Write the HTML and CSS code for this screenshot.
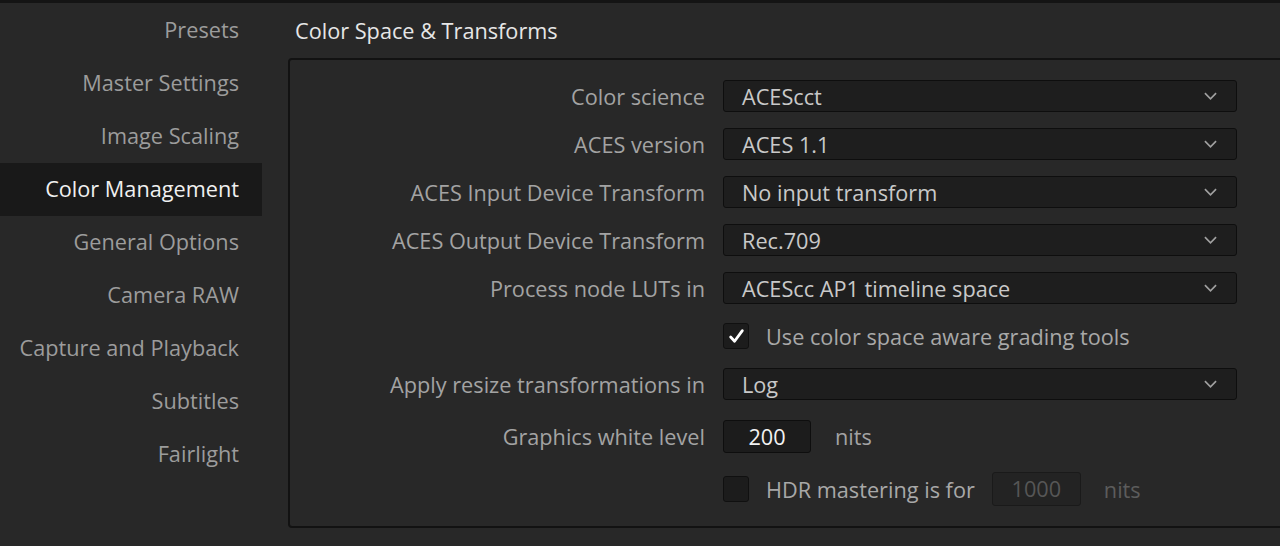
FILE: index.html
```html
<!DOCTYPE html>
<html lang="en">
<head>
    <meta charset="UTF-8">
    <title>Project Settings - Color Management</title>
    <link rel="stylesheet" href="styles.css">
</head>
<body>
    <div class="window">
        <nav class="sidebar">
            <div class="nav-item">Presets</div>
            <div class="nav-item">Master Settings</div>
            <div class="nav-item">Image Scaling</div>
            <div class="nav-item active">Color Management</div>
            <div class="nav-item">General Options</div>
            <div class="nav-item">Camera RAW</div>
            <div class="nav-item">Capture and Playback</div>
            <div class="nav-item">Subtitles</div>
            <div class="nav-item">Fairlight</div>
        </nav>

        <main class="content">
            <h2 class="section-title">Color Space &amp; Transforms</h2>
            <div class="panel">
                <div class="form">
                    <div class="label">Color science</div>
                    <div class="select"><span>ACEScct</span><svg class="chevron" viewBox="0 0 14 8"><polyline points="1,1 7,7 13,1"/></svg></div>

                    <div class="label">ACES version</div>
                    <div class="select"><span>ACES 1.1</span><svg class="chevron" viewBox="0 0 14 8"><polyline points="1,1 7,7 13,1"/></svg></div>

                    <div class="label">ACES Input Device Transform</div>
                    <div class="select"><span>No input transform</span><svg class="chevron" viewBox="0 0 14 8"><polyline points="1,1 7,7 13,1"/></svg></div>

                    <div class="label">ACES Output Device Transform</div>
                    <div class="select"><span>Rec.709</span><svg class="chevron" viewBox="0 0 14 8"><polyline points="1,1 7,7 13,1"/></svg></div>

                    <div class="label">Process node LUTs in</div>
                    <div class="select"><span>ACEScc AP1 timeline space</span><svg class="chevron" viewBox="0 0 14 8"><polyline points="1,1 7,7 13,1"/></svg></div>

                    <div class="label"></div>
                    <div class="check-row">
                        <span class="checkbox checked"><svg viewBox="0 0 16 16"><path d="M2.5 8.5 L6.2 12.5 L13.5 2.5"/></svg></span>
                        <span class="check-text">Use color space aware grading tools</span>
                    </div>

                    <div class="label">Apply resize transformations in</div>
                    <div class="select"><span>Log</span><svg class="chevron" viewBox="0 0 14 8"><polyline points="1,1 7,7 13,1"/></svg></div>

                    <div class="label">Graphics white level</div>
                    <div class="check-row">
                        <span class="num-box">200</span>
                        <span class="unit">nits</span>
                    </div>

                    <div class="label"></div>
                    <div class="check-row">
                        <span class="checkbox"></span>
                        <span class="check-text">HDR mastering is for</span>
                        <span class="num-box disabled">1000</span>
                        <span class="unit disabled">nits</span>
                    </div>
                </div>
            </div>
        </main>
    </div>
</body>
</html>
```

FILE: styles.css
```css
html, body {
    margin: 0;
    height: 100%;
    overflow: hidden;
}
body {
    background: #282828;
    border-top: 3px solid #141414;
    box-sizing: border-box;
    font-family: "Open Sans", "Noto Sans", sans-serif;
    font-size: 21.7px;
    color: #a6a6a6;
}
.window {
    display: flex;
}
.sidebar {
    width: 262px;
    flex-shrink: 0;
    padding-top: 1px;
}
.nav-item {
    height: 53px;
    line-height: 52px;
    text-align: right;
    padding-right: 23px;
    color: #9c9c9c;
    white-space: nowrap;
}
.nav-item.active {
    background: #191919;
    color: #f0f0f0;
}
.content {
    flex: 1;
    padding-left: 26px;
}
.section-title {
    margin: 0;
    height: 55px;
    line-height: 55px;
    padding-left: 7px;
    font-size: 21.7px;
    font-weight: normal;
    color: #e6e6e6;
}
.panel {
    width: 1100px;
    height: 470px;
    box-sizing: border-box;
    border: 2px solid #121212;
    border-radius: 4px;
    background: #282828;
}
.form {
    display: grid;
    grid-template-columns: 415px 514px;
    grid-template-rows: repeat(7, 32px) 40px 34px;
    column-gap: 18px;
    row-gap: 16px;
    padding-top: 20px;
    align-items: center;
}
.label {
    text-align: right;
    color: #a3a3a3;
    white-space: nowrap;
}
.select {
    height: 32px;
    box-sizing: border-box;
    background: #1e1e1e;
    border: 1px solid #0e0e0e;
    border-radius: 3px;
    display: flex;
    align-items: center;
    justify-content: space-between;
    padding: 0 19px 0 18px;
    color: #c9c9c9;
}
.chevron {
    width: 13px;
    height: 8px;
    fill: none;
    stroke: #a0a0a0;
    stroke-width: 1.8;
}
.check-row {
    display: flex;
    align-items: center;
}
.checkbox {
    width: 26px;
    height: 26px;
    box-sizing: border-box;
    background: #1c1c1c;
    border: 1px solid #101010;
    border-radius: 3px;
    display: flex;
    align-items: center;
    justify-content: center;
    margin-right: 17px;
}
.checkbox svg {
    width: 17px;
    height: 17px;
    fill: none;
    stroke: #ffffff;
    stroke-width: 2.6;
    stroke-linecap: round;
    stroke-linejoin: round;
}
.check-text {
    color: #a8a8a8;
    white-space: nowrap;
}
.num-box {
    width: 88px;
    height: 33px;
    box-sizing: border-box;
    background: #1c1c1c;
    border: 1px solid #0e0e0e;
    border-radius: 3px;
    text-align: center;
    line-height: 31px;
    color: #f2f2f2;
    margin-right: 24px;
}
.check-text + .num-box {
    margin-left: 17px;
}
.num-box.disabled {
    width: 89px;
    height: 34px;
    background: #232323;
    border-color: #1a1a1a;
    color: #565656;
    line-height: 32px;
    margin-right: 23px;
}
.unit {
    color: #a3a3a3;
}
.unit.disabled {
    color: #5c5c5c;
}
```
